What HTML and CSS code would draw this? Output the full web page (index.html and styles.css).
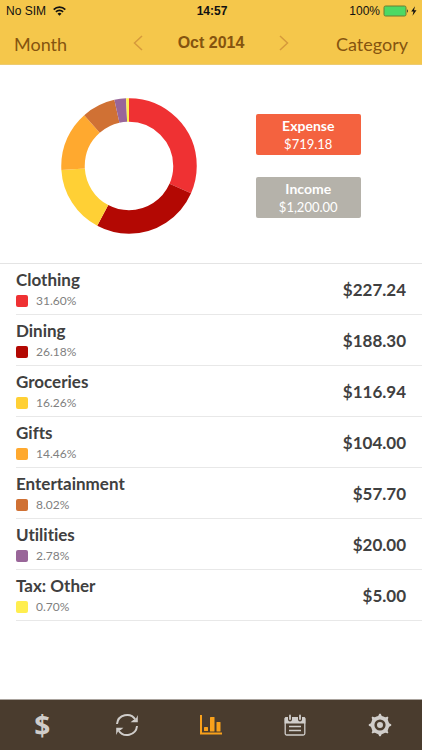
FILE: index.html
```html
<!DOCTYPE html>
<html lang="en">
<head>
<meta charset="utf-8">
<meta name="viewport" content="width=device-width, initial-scale=1">
<title>Spending by category</title>
<link rel="stylesheet" href="styles.css">
</head>
<body>
<header class="header">
  <div class="status">
    <span class="status-left">No SIM
      <svg class="wifi" width="13" height="10" viewBox="0 0 13 10" aria-hidden="true"><g fill="none" stroke="#111" stroke-width="1.7"><path d="M.7 3.6a8.2 8.2 0 0 1 11.6 0"/><path d="M2.9 5.9a5.1 5.1 0 0 1 7.2 0"/></g><path d="M6.5 9.8 4.5 7.7a2.8 2.8 0 0 1 4 0z" fill="#111"/></svg>
    </span>
    <span class="status-time">14:57</span>
    <span class="status-right">100%
      <svg width="35" height="12" viewBox="0 0 35 12" aria-hidden="true"><rect x="1" y="1" width="22" height="10" rx="1.5" fill="#4cd964" stroke="#6b7d33"/><path d="M24 4.3a2 2 0 0 1 0 3.4z" fill="#333"/><path d="M32 1.2 28.2 6.600h2.300l-1 4.200 4-5.500h-2.500z" fill="#111"/></svg>
    </span>
  </div>
  <nav class="nav" aria-label="Period">
    <button class="nav-link" type="button">Month</button>
    <div class="period">
      <button class="arrow" type="button" aria-label="Previous month"><svg width="10" height="16" viewBox="0 0 10 16"><path d="M9 1 1.5 8 9 15"/></svg></button>
      <h1 class="period-title">Oct 2014</h1>
      <button class="arrow" type="button" aria-label="Next month"><svg width="10" height="16" viewBox="0 0 10 16"><path d="M1 1 8.500 8 1 15"/></svg></button>
    </div>
    <button class="nav-link nav-end" type="button">Category</button>
  </nav>
</header>
<main class="content">
  <section class="summary">
    <svg class="donut" width="136" height="136" viewBox="0 0 136 136" role="img" aria-label="Expenses by category">
      <g fill="none" stroke-width="23.500" transform="rotate(-90 68 68)">
        <circle cx="68" cy="68" r="56" pathLength="100" stroke="#ef3133" stroke-dasharray="31.600 68.400"/>
        <circle cx="68" cy="68" r="56" pathLength="100" stroke="#b30803" stroke-dasharray="26.180 73.820" stroke-dashoffset="-31.600"/>
        <circle cx="68" cy="68" r="56" pathLength="100" stroke="#ffd035" stroke-dasharray="16.260 83.740" stroke-dashoffset="-57.780"/>
        <circle cx="68" cy="68" r="56" pathLength="100" stroke="#ffa92f" stroke-dasharray="14.460 85.540" stroke-dashoffset="-74.040"/>
        <circle cx="68" cy="68" r="56" pathLength="100" stroke="#d07134" stroke-dasharray="8.020 91.980" stroke-dashoffset="-88.500"/>
        <circle cx="68" cy="68" r="56" pathLength="100" stroke="#996699" stroke-dasharray="2.780 97.220" stroke-dashoffset="-96.520"/>
        <circle cx="68" cy="68" r="56" pathLength="100" stroke="#ffee4f" stroke-dasharray=".7 99.300" stroke-dashoffset="-99.300"/>
      </g>
    </svg>
    <div class="totals">
      <button class="total expense" type="button"><span class="total-name">Expense</span><span>$719.18</span></button>
      <button class="total income" type="button"><span class="total-name">Income</span><span>$1,200.00</span></button>
    </div>
  </section>
  <ul class="list">
    <li class="row"><div><h2 class="name">Clothing</h2><p class="share"><i class="swatch red"></i>31.60%</p></div><span class="amount">$227.24</span></li>
    <li class="row"><div><h2 class="name">Dining</h2><p class="share"><i class="swatch crimson"></i>26.18%</p></div><span class="amount">$188.30</span></li>
    <li class="row"><div><h2 class="name">Groceries</h2><p class="share"><i class="swatch gold"></i>16.26%</p></div><span class="amount">$116.94</span></li>
    <li class="row"><div><h2 class="name">Gifts</h2><p class="share"><i class="swatch orange"></i>14.46%</p></div><span class="amount">$104.00</span></li>
    <li class="row"><div><h2 class="name">Entertainment</h2><p class="share"><i class="swatch copper"></i>8.02%</p></div><span class="amount">$57.70</span></li>
    <li class="row"><div><h2 class="name">Utilities</h2><p class="share"><i class="swatch purple"></i>2.78%</p></div><span class="amount">$20.00</span></li>
    <li class="row"><div><h2 class="name">Tax: Other</h2><p class="share"><i class="swatch yellow"></i>0.70%</p></div><span class="amount">$5.00</span></li>
  </ul>
</main>
<nav class="tabs" aria-label="Sections">
  <button class="tab dollar" type="button" aria-label="Transactions">$</button>
  <button class="tab" type="button" aria-label="Recurring"><svg width="24" height="24" viewBox="0 0 24 24"><g fill="none" stroke="currentColor" stroke-width="2"><path d="M2 11A10 10 0 0 1 20.500 6.800"/><path d="M22 13A10 10 0 0 1 3.500 17.200"/></g><path d="M22.800 2v7.200h-7.200l2.600-2.200 2.200-.2zM1.200 22v-7.200h7.200l-2.600 2.200-2.200.2z" fill="currentColor"/></svg></button>
  <button class="tab active" type="button" aria-label="Reports" aria-current="page"><svg width="24" height="24" viewBox="0 0 24 24" fill="currentColor"><path d="M1 2h2v17.500h20v2H1z"/><rect x="5" y="14" width="4" height="4" rx=".5"/><rect x="11" y="4" width="4.500" height="14.500" rx=".5"/><rect x="17.500" y="9" width="4" height="9.500" rx=".5"/></svg></button>
  <button class="tab" type="button" aria-label="Calendar"><svg width="24" height="24" viewBox="0 0 24 24"><rect x="2.200" y="4.600" width="19.600" height="17.400" rx="1.500" fill="none" stroke="currentColor" stroke-width="1.300"/><path d="M1.600 10.500V5.500Q1.600 4 3 4h18Q22.400 4 22.400 5.500v5z" fill="currentColor"/><g stroke-linecap="round"><path d="M7 3v3.500M17 3v3.500" stroke="#4a3c2e" stroke-width="4"/><path d="M7 2.500v3.500M17 2.500v3.500" stroke="currentColor" stroke-width="1.800"/></g><path d="M6 13.500h12M6 17.500h12" stroke="currentColor" stroke-width="1.300"/></svg></button>
  <button class="tab" type="button" aria-label="Settings"><svg width="24" height="24" viewBox="0 0 24 24"><path d="M11.300.8h1.400Q13.300 3.500 15.500 3.600 17.600 4.800 19.400 3.600l1 1Q19.200 6.400 20.400 8.500 20.500 10.700 23.200 11.300v1.400Q20.500 13.300 20.400 15.500 19.200 17.600 20.400 19.400l-1 1Q17.600 19.200 15.500 20.400 13.300 20.500 12.700 23.200h-1.400Q10.700 20.500 8.500 20.400 6.400 19.200 4.600 20.400l-1-1Q4.800 17.600 3.600 15.500 3.500 13.300.8 12.700v-1.400Q3.500 10.700 3.600 8.500 4.800 6.400 3.600 4.600l1-1Q6.400 4.800 8.500 3.600 10.700 3.500 11.300.8z" fill="currentColor"/><circle cx="12" cy="12" r="4.300" fill="none" stroke="#4a3c2e" stroke-width="2.600"/></svg></button>
</nav>
</body>
</html>
```
FILE: styles.css
```css
* { box-sizing: border-box; }

body {
  margin: 0;
  min-height: 100vh;
  display: flex;
  flex-direction: column;
  background: #fff;
  color: #404040;
  font-family: Lato, "Open Sans", sans-serif;
  font-variant-ligatures: none;
}

button {
  border: 0;
  padding: 0;
  background: none;
  color: inherit;
  font: inherit;
}

h1, h2, p, ul { margin: 0; padding: 0; }

svg { display: block; }

.header {
  background: #f5c74b;
  border-bottom: 1px solid #edcb70;
}

.status {
  display: grid;
  grid-template-columns: 1fr auto 1fr;
  align-items: center;
  height: 22px;
  padding: 0 4px 0 6px;
  color: #111;
  font: 12px/22px "Liberation Sans", Arial, sans-serif;
}

.status-left, .status-right {
  display: flex;
  align-items: center;
  gap: 7px;
}

.status-right { justify-content: flex-end; gap: 3px; }

.status-time { font-weight: bold; }

.nav {
  display: grid;
  grid-template-columns: 1fr auto 1fr;
  align-items: center;
  height: 42px;
  padding: 0 14px;
  color: #85540f;
}

.nav-link {
  justify-self: start;
  padding-top: 2px;
  font-size: 18px;
  line-height: 24px;
}

.nav-end { justify-self: end; }

.period {
  display: flex;
  align-items: center;
  gap: 35px;
}

.period-title { font: bold 16px/24px "Liberation Sans", Arial, sans-serif; }

.arrow path {
  fill: none;
  stroke: #d69a3c;
  stroke-width: 1.5px;
}

.content { flex: 1; }

.summary {
  display: grid;
  grid-template-columns: 1fr 1fr;
  align-items: center;
  height: 198px;
  padding: 4px 22px 0 33px;
}

.donut { margin-left: 28px; }

.totals {
  display: flex;
  flex-direction: column;
  align-items: center;
  gap: 22px;
}

.total {
  display: flex;
  flex-direction: column;
  align-items: center;
  justify-content: center;
  width: 105px;
  height: 41px;
  border-radius: 2px;
  color: #fff;
  font-size: 13px;
  line-height: 18px;
}

.total-name { font-size: 14px; font-weight: bold; }
.expense { background: #f4623f; }
.income { background: #b5b2aa; }

.list {
  list-style: none;
  padding-left: 16px;
  border-top: 1px solid #e4e4e4;
}

.row {
  display: flex;
  justify-content: space-between;
  align-items: center;
  height: 51px;
  padding-right: 16px;
  border-bottom: 1px solid #e8e8e8;
}

.name {
  font-size: 17px;
  font-weight: bold;
  line-height: 24px;
}

.share {
  display: flex;
  align-items: center;
  gap: 8px;
  color: #808080;
  font-size: 12px;
  line-height: 18px;
}

.swatch {
  width: 12px;
  height: 12px;
  border-radius: 2px;
}

.red { background: #ef3133; }
.crimson { background: #b30803; }
.gold { background: #ffd035; }
.orange { background: #ffa92f; }
.copper { background: #d07134; }
.purple { background: #996699; }
.yellow { background: #ffee4f; }

.amount { font-size: 17px; font-weight: bold; }

.tabs {
  display: grid;
  grid-template-columns: repeat(5, 1fr);
  height: 51px;
  background: #4a3c2e;
  border-top: 1px solid #aaa39d;
}

.tab {
  display: flex;
  align-items: center;
  justify-content: center;
  color: #d0cdca;
}

.dollar {
  font: bold 28px/32px "Open Sans", sans-serif;
}

.active { color: #f9a11b; }
```
